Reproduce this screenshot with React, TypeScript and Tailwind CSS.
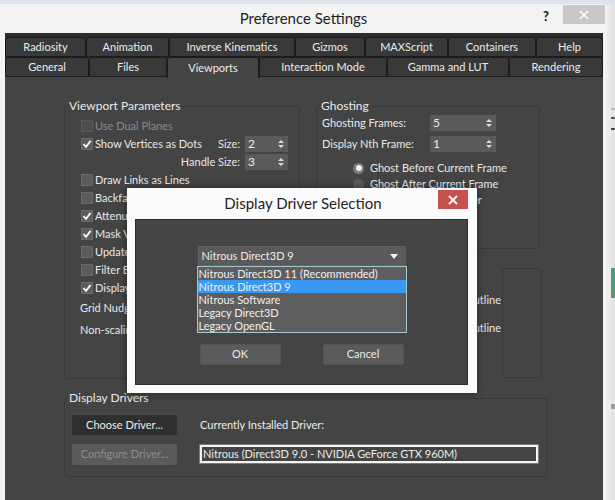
import type { ReactNode } from "react";

// ─── Small controls ──────────────────────────────────────────────────────────

function CheckBox({ checked = false, disabled = false, label }: { checked?: boolean; disabled?: boolean; label: string }) {
    return (
        <div className="flex h-[18px] items-center whitespace-nowrap">
            <span
                className={`flex h-[12px] w-[12px] shrink-0 items-center justify-center border ${disabled ? "border-[#5a5a5a] bg-[#4e4e4e]" : "border-[#6a6a6a] bg-[#5c5c5c]"}`}
            >
                {checked && (
                    <svg width="10" height="10" viewBox="0 0 10 10">
                        <path d="M1.5 5.2 L4 7.8 L8.6 1.8" stroke="#f4f4f4" strokeWidth="1.9" fill="none" />
                    </svg>
                )}
            </span>
            <span className={`ml-[2px] ${disabled ? "text-[#8a8a8a]" : "text-[#e8e8e8]"}`}>{label}</span>
        </div>
    );
}

function Spinner({ value, w }: { value: string; w: string }) {
    return (
        <div className={`flex h-[16px] ${w} shrink-0 items-center justify-between bg-[#5a5a5a] pl-[3px] pr-[4px] text-[12px] text-[#ececec]`}>
            <span>{value}</span>
            <svg width="6" height="10" viewBox="0 0 6 10">
                <polygon points="0,4 3,1 6,4" fill="#dcdcdc" />
                <polygon points="0,6 3,9 6,6" fill="#dcdcdc" />
            </svg>
        </div>
    );
}

function Radio({ selected = false, label }: { selected?: boolean; label: string }) {
    return (
        <div className="flex h-[16px] items-center whitespace-nowrap">
            <span
                className={`flex h-[11px] w-[11px] items-center justify-center rounded-full ${selected ? "bg-[#7a7a7a]" : "bg-[#5c5c5c]"}`}
            >
                {selected && <span className="h-[6px] w-[6px] rounded-full bg-[#f2f2f2]" />}
            </span>
            <span className="ml-[6px] text-[#e8e8e8]">{label}</span>
        </div>
    );
}

function Group({ label, className, children }: { label: string; className: string; children?: ReactNode }) {
    return (
        <fieldset className={`min-w-0 overflow-hidden rounded-[3px] border border-[#393939] ${className}`}>
            <legend className="ml-[3px] px-[1px] text-[12px] leading-[14px] text-[#e8e8e8]">{label}</legend>
            {children}
        </fieldset>
    );
}

// ─── Tabs ─────────────────────────────────────────────────────────────────────

const ROW1: [string, string][] = [
    ["Radiosity", "w-[81px]"],
    ["Animation", "w-[83px]"],
    ["Inverse Kinematics", "w-[126px]"],
    ["Gizmos", "w-[70px]"],
    ["MAXScript", "w-[83px]"],
    ["Containers", "w-[88px]"],
    ["Help", "w-[67px]"],
];

const ROW2: [string, string][] = [
    ["General", "w-[84px]"],
    ["Files", "w-[78px]"],
    ["Viewports", "w-[92px]"],
    ["Interaction Mode", "w-[128px]"],
    ["Gamma and LUT", "w-[122px]"],
    ["Rendering", "w-[94px]"],
];

function Tab({ label, w, active = false }: { label: string; w: string; active?: boolean }) {
    return (
        <div
            className={`${w} flex items-center justify-center rounded-t-[3px] border border-[#1c1c1c] text-[#ececec] ${
                active ? "relative z-10 h-[21px] border-b-0 bg-[#444444]" : "h-[20px] bg-[#393939]"
            }`}
        >
            {label}
        </div>
    );
}

// ─── Dialog ───────────────────────────────────────────────────────────────────

const DRIVERS = [
    "Nitrous Direct3D 11 (Recommended)",
    "Nitrous Direct3D 9",
    "Nitrous Software",
    "Legacy Direct3D",
    "Legacy OpenGL",
];

function DriverDialog() {
    return (
        <div className="absolute left-[127px] top-[188px] flex h-[205px] w-[350px] flex-col bg-[#fbfbfb] text-[11px] shadow-[0_0_8px_rgba(0,0,0,0.45)]">
            <div className="grid h-[31px] grid-cols-[1fr_auto_1fr]">
                <div />
                <div className="flex items-center pl-[2px] text-[15px] text-[#1e1e1e]">Display Driver Selection</div>
                <div className="flex justify-end pr-[9px] pt-[2px]">
                    <div className="flex h-[19px] w-[30px] items-center justify-center bg-[#c75050]">
                        <svg width="10" height="10" viewBox="0 0 10 10">
                            <path d="M1 1 L9 9 M9 1 L1 9" stroke="#ffffff" strokeWidth="1.8" />
                        </svg>
                    </div>
                </div>
            </div>
            <div className="ml-[8px] mr-[9px] flex h-[166px] flex-col items-center border border-[#2c2c2c] bg-[#444444] pt-[26px]">
                <div className="flex h-[20px] w-[208px] items-center justify-between border border-[#616161] bg-[#5a5a5a] pl-[3px] pr-[7px] text-[#ececec]">
                    <span>Nitrous Direct3D 9</span>
                    <svg width="8" height="5" viewBox="0 0 8 5">
                        <polygon points="0,0 8,0 4,5" fill="#f0f0f0" />
                    </svg>
                </div>
                <div className="flex h-[67px] w-[210px] flex-col border border-[#a6c8d2] bg-[#5e5e5e] text-[#f0f0f0]">
                    {DRIVERS.map((d, i) => (
                        <div
                            key={d}
                            className={`flex h-[13px] items-center pl-[1px] leading-[13px] ${i === 1 ? "bg-[#3a98f5]" : ""}`}
                        >
                            {d}
                        </div>
                    ))}
                </div>
                <div className="mt-[11px] flex gap-[42px]">
                    {["OK", "Cancel"].map((b) => (
                        <div
                            key={b}
                            className="flex h-[21px] w-[81px] items-center justify-center rounded-[2px] border border-[#545454] bg-[#5b5b5b] text-[#ececec]"
                        >
                            {b}
                        </div>
                    ))}
                </div>
            </div>
        </div>
    );
}

// ─── Page ─────────────────────────────────────────────────────────────────────

export default function App() {
    return (
        <div className="relative h-[500px] w-[615px] overflow-hidden bg-[#dde3ea] font-['Lato','Liberation_Sans',sans-serif] text-[11px]">
            <div className="flex h-full pt-[4px]">
                {/* Preference window */}
                <div className="flex h-[496px] w-[607px] flex-col bg-[#f3f3f3]">
                    {/* Title bar */}
                    <div className="grid h-[29px] grid-cols-[1fr_auto_1fr]">
                        <div />
                        <div className="flex items-center text-[15px] text-[#1e1e1e]">Preference Settings</div>
                        <div className="flex justify-end gap-[14px] pr-[2px] pt-[1px]">
                            <span className="mt-[2px] text-[13px] font-bold text-[#111]">?</span>
                            <div className="flex h-[19px] w-[42px] items-center justify-center bg-[#c8c8c8]">
                                <svg width="10" height="10" viewBox="0 0 10 10">
                                    <path d="M1 1 L9 9 M9 1 L1 9" stroke="#ffffff" strokeWidth="1.5" />
                                </svg>
                            </div>
                        </div>
                    </div>

                    {/* Body */}
                    <div className="ml-[5px] mr-[4px] flex flex-1 flex-col bg-[#2b2b2b] pt-[4px]">
                        <div className="flex">
                            {ROW1.map(([l, w]) => (
                                <Tab key={l} label={l} w={w} />
                            ))}
                        </div>
                        <div className="flex h-[20px] items-start">
                            {ROW2.map(([l, w]) => (
                                <Tab key={l} label={l} w={w} active={l === "Viewports"} />
                            ))}
                        </div>

                        {/* Panel */}
                        <div className="flex flex-1 flex-col bg-[#444444] pl-[59px] pt-[22px]">
                            <div className="flex gap-[16px]">
                                <Group label="Viewport Parameters" className="h-[280px] w-[236px] shrink-0">
                                    <div className="flex flex-col pl-[16px] pr-[11px] pt-[4px]">
                                        <CheckBox disabled label="Use Dual Planes" />
                                        <div className="flex items-center">
                                            <CheckBox checked label="Show Vertices as Dots" />
                                            <span className="ml-auto mr-[5px] text-[#e8e8e8]">Size:</span>
                                            <Spinner value="2" w="w-[43px]" />
                                        </div>
                                        <div className="flex h-[18px] items-center justify-end">
                                            <span className="mr-[5px] text-[#e8e8e8]">Handle Size:</span>
                                            <Spinner value="3" w="w-[43px]" />
                                        </div>
                                        <CheckBox label="Draw Links as Lines" />
                                        <CheckBox label="Backface Cull on Object Creation" />
                                        <CheckBox checked label="Attenuate Lights" />
                                        <CheckBox checked label="Mask Viewport to Safe Region" />
                                        <CheckBox label="Update Background Image While Playing" />
                                        <CheckBox label="Filter Environment Backgrounds" />
                                        <CheckBox checked label="Display World Axis" />
                                        <div className="-ml-[1px] flex h-[22px] items-center text-[#e8e8e8]">Grid Nudge Distance:</div>
                                        <div className="-ml-[1px] flex h-[22px] items-center text-[#e8e8e8]">Non-scaling Object Size:</div>
                                    </div>
                                </Group>

                                <div className="flex flex-col">
                                    <Group label="Ghosting" className="h-[150px] w-[224px]">
                                        <div className="flex flex-col pl-[5px] pt-[2px]">
                                            <div className="flex items-center">
                                                <span className="w-[108px] text-[#e8e8e8]">Ghosting Frames:</span>
                                                <Spinner value="5" w="w-[66px]" />
                                            </div>
                                            <div className="mt-[4px] flex items-center">
                                                <span className="w-[108px] text-[#e8e8e8]">Display Nth Frame:</span>
                                                <Spinner value="1" w="w-[66px]" />
                                            </div>
                                            <div className="mt-[8px] flex flex-col pl-[31px]">
                                                <Radio selected label="Ghost Before Current Frame" />
                                                <Radio label="Ghost After Current Frame" />
                                                <Radio label="Ghost Before and After" />
                                            </div>
                                        </div>
                                    </Group>
                                    <div className="mt-[19px] flex h-[110px] w-[226px]">
                                        <div className="flex flex-1 flex-col items-end pr-[1px] pt-[25px] text-[#e8e8e8]">
                                            <span className="leading-[14px]">Selection Bracket Outline</span>
                                            <span className="mt-[14px] leading-[14px]">Highlight Selected Outline</span>
                                        </div>
                                        <div className="w-[40px] rounded-[3px] border border-[#393939]" />
                                    </div>
                                </div>
                            </div>

                            <Group label="Display Drivers" className="mt-[12px] h-[86px] w-[484px]">
                                <div className="flex pl-[7px] pr-[9px] pt-[10px]">
                                    <div className="flex w-[105px] flex-col gap-[9px]">
                                        <div className="flex h-[20px] items-center justify-center rounded-[2px] bg-[#2f2f2f] text-[#ececec]">
                                            Choose Driver...
                                        </div>
                                        <div className="flex h-[21px] items-center justify-center rounded-[2px] bg-[#5a5a5a] text-[#8e8e8e]">
                                            Configure Driver...
                                        </div>
                                    </div>
                                    <div className="ml-[23px] flex flex-1 flex-col">
                                        <div className="flex h-[20px] items-center text-[#ececec]">Currently Installed Driver:</div>
                                        <div className="mt-[10px] flex h-[18px] items-center border-2 border-[#f4f4f4] bg-[#444444] pl-[1px] text-[#ececec] outline outline-1 outline-[#7a7a7a]">
                                            Nitrous (Direct3D 9.0 - NVIDIA GeForce GTX 960M)
                                        </div>
                                    </div>
                                </div>
                            </Group>
                        </div>
                    </div>
                </div>

                {/* What lies behind the window */}
                <div className="flex flex-1 bg-[#ececec]">
                    <div className="ml-auto flex w-[4px] flex-col bg-[#e4e4e4]">
                        <div className="mt-[104px] h-[36px] bg-[linear-gradient(#bbb_0_2px,#e4e4e4_2px_9px,#555_9px_11px,#e4e4e4_11px_20px,#444_20px_22px,#e4e4e4_22px)]" />
                        <div className="mt-[124px] h-[30px] bg-[#4f9a78]" />
                        <div className="mt-[106px] h-[5px] bg-[#9a9a9a]" />
                    </div>
                </div>
            </div>

            <DriverDialog />
        </div>
    );
}
